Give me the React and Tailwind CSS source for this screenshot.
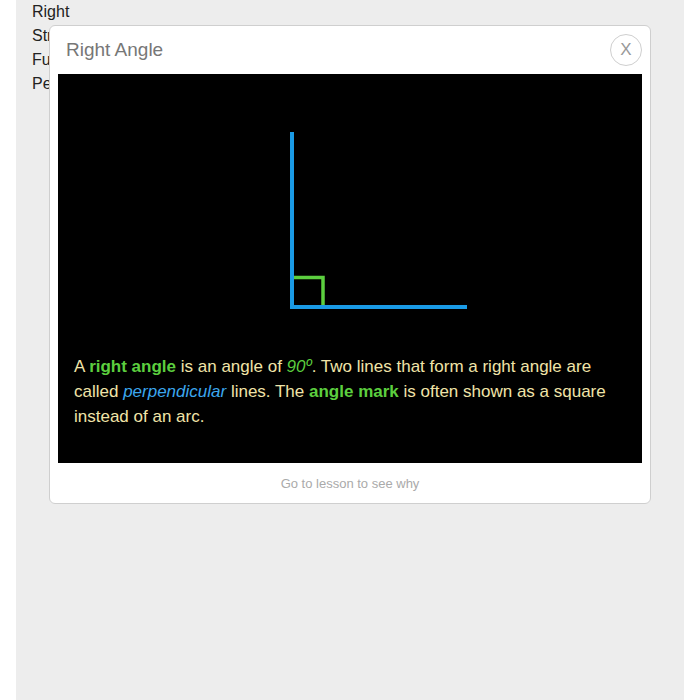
import React from 'react';

const terms = ['Right', 'Straight', 'Full', 'Perpendicular'];

export default function App() {
  return (
    <div className="relative min-h-[700px] bg-white px-4" style={{ fontFamily: '"Liberation Sans", Arial, sans-serif' }}>
      {/* page behind the popup */}
      <div className="min-h-[700px] bg-[#ededed] px-4 text-[16px] leading-6 text-[#222]">
        {terms.map((t) => (
          <div key={t}>{t}</div>
        ))}
      </div>

      {/* popup */}
      <div className="absolute left-[49px] top-[25px] w-[602px] rounded-md border border-[#cfcfcf] bg-white">
        <div className="flex h-[48px] items-center justify-between pl-4 pr-2">
          <h2 className="text-[19px] text-[#777]">Right Angle</h2>
          <button className="flex h-8 w-8 items-center justify-center rounded-full border border-[#cfcfcf] text-[17px] text-[#999]">
            X
          </button>
        </div>

        <div className="mx-2 flex h-[389px] flex-col bg-black">
          <svg width="584" height="280" viewBox="0 0 584 280" className="shrink-0">
            <polyline points="234,203.5 265,203.5 265,233" fill="none" stroke="#5ccf3f" strokeWidth="3.5" />
            <line x1="234" y1="58" x2="234" y2="235" stroke="#1a9be6" strokeWidth="4" />
            <line x1="234" y1="233" x2="409" y2="233" stroke="#1a9be6" strokeWidth="4" />
          </svg>
          <p className="px-4 text-[17px] leading-[25px] text-[#f0e4a8]">
            A <b className="text-[#5ccf3f]">right angle</b> is an angle of <i className="text-[#5ccf3f]">90º</i>. Two lines
            that form a right angle are called <i className="text-[#3ba7ee]">perpendicular</i> lines. The{' '}
            <b className="text-[#5ccf3f]">angle mark</b> is often shown as a square instead of an arc.
          </p>
        </div>

        <div className="flex h-[40px] items-center justify-center pt-px text-[13px] text-[#aaa]">Go to lesson to see why</div>
      </div>
    </div>
  );
}
